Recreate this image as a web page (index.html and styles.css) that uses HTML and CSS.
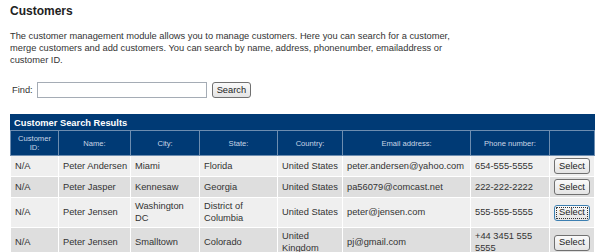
FILE: index.html
```html
<!DOCTYPE html>
<html>
  <head>
    <title>Customers</title>
    <link rel="stylesheet" href="styles.css">
  </head>
  <body>
    <h1>Customers</h1>

    <p class="intro">
      The customer management module allows you to manage customers. Here you can search for a customer,
      merge customers and add customers. You can search by name, address, phonenumber, emailaddress or
      customer ID.
    </p>

    <div class="find-row">
      <label for="find">Find:</label>
      <input type="text" id="find">
      <button class="btn">Search</button>
    </div>

    <table class="results">
      <colgroup>
        <col style="width: 48px">
        <col style="width: 72px">
        <col style="width: 69px">
        <col style="width: 78px">
        <col style="width: 65px">
        <col style="width: 128px">
        <col style="width: 79px">
        <col style="width: 45px">
      </colgroup>
      <thead>
        <tr>
          <th class="caption" colspan="8">Customer Search Results</th>
        </tr>
        <tr class="head">
          <th>Customer ID:</th>
          <th>Name:</th>
          <th>City:</th>
          <th>State:</th>
          <th>Country:</th>
          <th>Email address:</th>
          <th>Phone number:</th>
          <th></th>
        </tr>
      </thead>
      <tbody>
        <tr class="odd">
          <td>N/A</td>
          <td>Peter Andersen</td>
          <td>Miami</td>
          <td>Florida</td>
          <td>United States</td>
          <td>peter.andersen@yahoo.com</td>
          <td>654-555-5555</td>
          <td><button class="btn">Select</button></td>
        </tr>
        <tr class="even">
          <td>N/A</td>
          <td>Peter Jasper</td>
          <td>Kennesaw</td>
          <td>Georgia</td>
          <td>United States</td>
          <td>pa56079@comcast.net</td>
          <td>222-222-2222</td>
          <td><button class="btn">Select</button></td>
        </tr>
        <tr class="odd">
          <td>N/A</td>
          <td>Peter Jensen</td>
          <td>Washington DC</td>
          <td>District of Columbia</td>
          <td>United States</td>
          <td>peter@jensen.com</td>
          <td>555-555-5555</td>
          <td><button class="btn focused">Select</button></td>
        </tr>
        <tr class="even">
          <td>N/A</td>
          <td>Peter Jensen</td>
          <td>Smalltown</td>
          <td>Colorado</td>
          <td>United Kingdom</td>
          <td>pj@gmail.com</td>
          <td>+44 3451 555 5555</td>
          <td><button class="btn">Select</button></td>
        </tr>
      </tbody>
    </table>
  </body>
</html>
```

FILE: styles.css
```css
body {
  font-family: Arial, "Liberation Sans", sans-serif;
  font-size: 9.3px;
  color: #333;
  background-color: #fff;
  margin: 0;
  padding: 4px 10px;
}

h1 {
  font-size: 12px;
  font-weight: bold;
  color: #222;
  margin: 0 0 12px;
}

.intro {
  width: 445px;
  line-height: 12px;
  margin: 0 0 16px;
}

.find-row {
  display: flex;
  align-items: center;
  padding-left: 2px;
  margin-bottom: 16px;
}

.find-row label {
  margin-right: 4px;
}

.find-row input {
  width: 166px;
  height: 14px;
  padding: 0 1px;
  border: 1px solid #a5acb5;
  margin: 0 5px 0 0;
  font-size: 9.3px;
}

.btn {
  font-family: Arial, "Liberation Sans", sans-serif;
  font-size: 9.3px;
  color: #222;
  background: linear-gradient(#fafafa, #e4e4e4);
  border: 1px solid #707070;
  border-radius: 3px;
  height: 16px;
  padding: 0 4px;
  line-height: 13px;
}

.btn.focused {
  border-color: #3c7fb1;
  outline: 1px dotted #333;
  outline-offset: -3px;
}

.results {
  width: 584px;
  table-layout: fixed;
  border-collapse: collapse;
}

.results th,
.results td {
  border: 1px solid #ffffff;
}

.results th.caption {
  background-color: #003a75;
  color: #fff;
  font-size: 9.3px;
  font-weight: bold;
  text-align: left;
  padding: 1px 3px;
  height: 13px;
  border-color: #003a75;
  border-bottom-color: #6d8db0;
}

.results .head th {
  background-color: #003a75;
  color: #c9d6e6;
  font-size: 7.6px;
  font-weight: normal;
  line-height: 9px;
  height: 24px;
  padding: 0 2px;
  border-color: #6d8db0;
  border-top: none;
}

.results td {
  padding: 2px 2px 3px 4px;
  line-height: 12px;
  height: 15px;
}

.results td:first-child {
  padding-left: 4px;
}

.results tr.odd td {
  background-color: #efefef;
}

.results tr.even td {
  background-color: #dedede;
}

.results td:last-child {
  padding: 0 3px;
  text-align: center;
}
```
